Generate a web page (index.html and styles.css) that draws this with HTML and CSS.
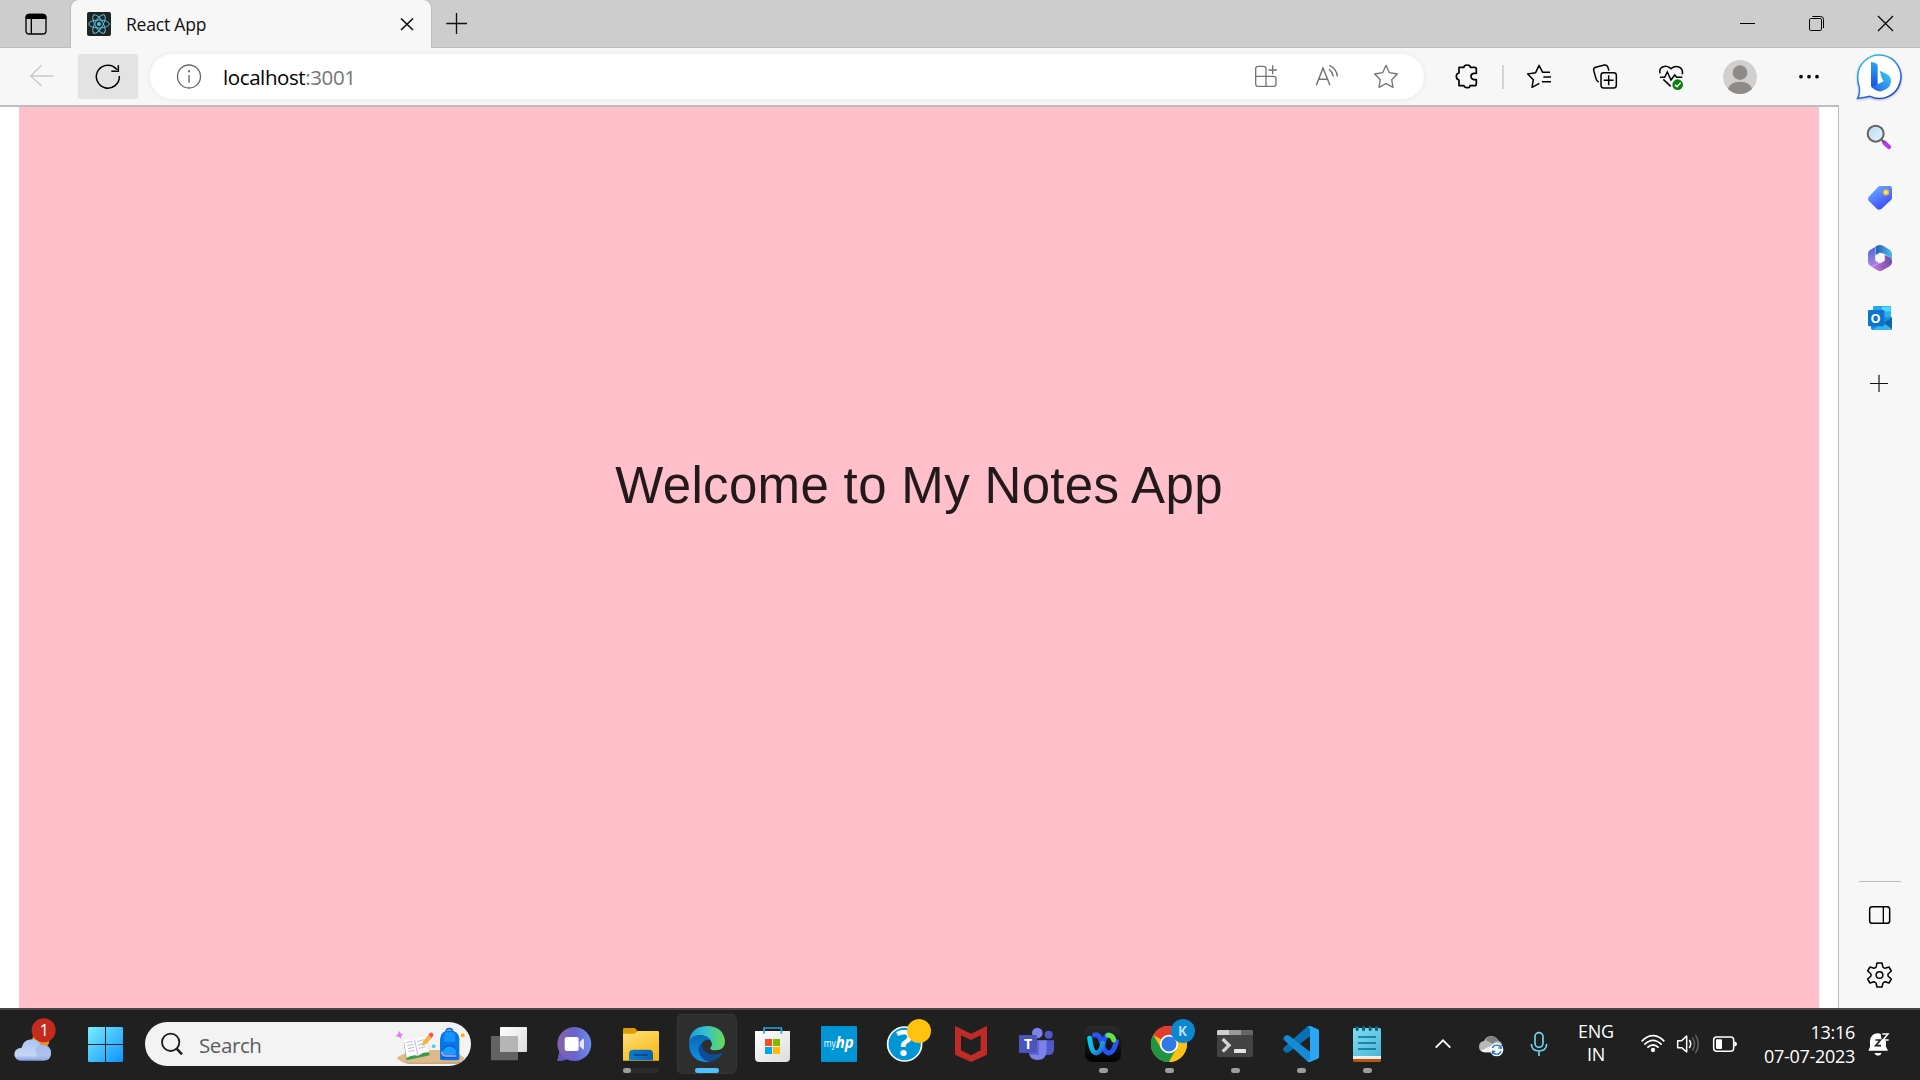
FILE: index.html
```html
<!DOCTYPE html>
<html lang="en">
<head>
<meta charset="utf-8">
<title>React App</title>
<link rel="stylesheet" href="styles.css">
</head>
<body>
<div class="desktop">
  <header class="titlebar">
    <svg width="71" height="48" viewBox="0 0 213 144"><rect x="78" y="43" width="60" height="59" rx="10" fill="none" stroke="#000" stroke-width="4"/><path d="M77 57V52Q77 41 88 41H128Q139 41 139 52V57ZM92 57H96V101H92Z"/></svg>
    <div class="tab">
      <svg class="favicon" width="24" height="24" viewBox="-12 -12 24 24"><rect x="-12" y="-12" width="24" height="24" rx="2" fill="#222"/><circle r="2" fill="#53c1de"/><g fill="none" stroke="#53c1de" stroke-width="1"><ellipse rx="10.4" ry="4"/><ellipse rx="10.4" ry="4" transform="rotate(60)"/><ellipse rx="10.4" ry="4" transform="rotate(120)"/></g></svg>
      <span class="tab-title">React App</span>
      <svg class="tab-close" width="14" height="14" viewBox="0 0 14 14"><path d="M1 1.500L13 13M13 1.500L1 13" fill="none" stroke="#111" stroke-width="1.700"/></svg>
    </div>
    <svg width="52" height="48" viewBox="1293 0 156 144"><path d="M1339 70.500H1401M1369.500 39V102" fill="none" stroke="#111" stroke-width="4"/></svg>
    <div class="window-controls">
      <svg width="69" height="48" viewBox="459 0 207 144"><path d="M540 70.500H585" stroke="#000" stroke-width="3"/></svg>
      <svg width="69" height="48" viewBox="666 0 207 144" fill="none" stroke="#000" stroke-width="3"><rect x="748.500" y="55.500" width="36" height="36" rx="4"/><path d="M757 49.500H782Q790.500 49.500 790.500 58V84"/></svg>
      <svg width="69" height="48" viewBox="873 0 207 144"><path d="M954 48L999 93M999 48L954 93" stroke="#000" stroke-width="3.500"/></svg>
    </div>
  </header>

  <div class="browser">
    <div class="browser-main">
      <nav class="toolbar">
        <svg width="78" height="57" viewBox="0 144 234 171" fill="none" stroke="#c9c9c9" stroke-width="4"><path d="M161 228H92M125 196L92 228L125 258"/></svg>
        <div class="reload"><svg width="60" height="45" viewBox="234 162 180 135" fill="none" stroke="#000" stroke-width="4.500"><path d="M358 228A34.500 34.500 0 1 1 351 209M355 196V214H334"/></svg></div>
        <div class="address">
          <svg width="74" height="45" viewBox="450 162 222 135"><circle cx="567" cy="229.500" r="34.500" fill="none" stroke="#666" stroke-width="4"/><path d="M565 225H569V248H565ZM564 211H570V217H564Z" fill="#666"/></svg>
          <span class="url">localhost<span class="port">:3001</span></span>
          <div class="address-actions">
            <svg width="60" height="45" viewBox="48 42 180 135" fill="none" stroke="#757575" stroke-width="4"><path d="M138 109V86Q138 79 131 79H114Q107 79 107 86V132Q107 139 114 139H161Q168 139 168 132V116Q168 109 161 109H107M138 109V139M145 90H171M158 76V103"/></svg>
            <svg width="60" height="45" viewBox="228 42 180 135" fill="none" stroke="#757575" stroke-width="4.500"><path d="M289 136L309 84L330 136M297 118H322M327 87Q337 95 340 109M328 76Q350 86 352 109"/></svg>
            <svg width="60" height="45" viewBox="408 42 180 135" fill="none" stroke="#757575" stroke-width="4" stroke-linejoin="round"><path d="M498 76L508 98L532 102L515 119L519 142L498 131L477 142L481 119L464 102L488 98Z"/></svg>
          </div>
        </div>
        <svg width="81" height="57" viewBox="612 24 243 171"><path d="M717 82H732Q732 75 741 75Q751 75 751 82H764Q769 82 769 87V100H761Q753 101 753 109Q753 117 761 119H769V131Q769 137 763 137H750Q750 143 741 143Q733 143 732 137H717V120Q709 119 709 109Q709 100 717 99Z" fill="none" stroke="#000" stroke-width="5" stroke-linejoin="round"/><path d="M849 75V147" stroke="#c8c8c8" stroke-width="4.500"/></svg>
        <svg width="68" height="57" viewBox="855 24 204 171" fill="none" stroke="#000" stroke-width="4.500" stroke-linejoin="round"><path d="M990 97H968L957 76L947 98L923 102L940 119L936 142L958 130M970 111H993M966 125H993"/></svg>
        <svg width="66" height="57" viewBox="39 144 198 171" fill="none" stroke="#000" stroke-width="4.500"><rect x="123" y="218" width="46" height="46" rx="8"/><path d="M146 226V256M131 241H161M116 246Q110 243 108 236L101 211Q100 204 107 202L133 195Q140 194 143 200L147 212"/></svg>
        <svg width="66" height="57" viewBox="237 144 198 171"><path d="M300 220C295 198 320 194 333 206C347 194 371 199 367 223M300 232H314L322 216L333 240L344 225L350 232H367M310 238L332 259" fill="none" stroke="#000" stroke-width="4.500"/><circle cx="353" cy="254" r="16" fill="#107c10"/><path d="M345 254L351 260L362 248" fill="none" stroke="#fff" stroke-width="4"/></svg>
        <svg width="70" height="57" viewBox="435 144 210 171"><defs><clipPath id="avatar-clip"><circle cx="540" cy="231" r="51"/></clipPath></defs><circle cx="540" cy="231" r="51" fill="#d2d0ce"/><g fill="#8d8a88" clip-path="url(#avatar-clip)"><circle cx="540" cy="218" r="22"/><path d="M501 282Q503 245 540 245Q577 245 579 282Z"/></g></svg>
        <svg width="62" height="57" viewBox="645 144 186 171"><circle cx="723" cy="230" r="5.500"/><circle cx="747" cy="230" r="5.500"/><circle cx="771" cy="230" r="5.500"/></svg>
      </nav>
      <main class="viewport">
        <section class="welcome"><h1>Welcome to My Notes App</h1></section>
      </main>
    </div>

    <aside class="sidebar">
      <svg class="bing" width="81" height="57" viewBox="837 144 243 171"><defs><linearGradient id="bing-ring" x1="0" y1="0" x2=".6" y2="1"><stop stop-color="#25d0ee"/><stop offset=".5" stop-color="#2a86ee"/><stop offset="1" stop-color="#1848d8"/></linearGradient><linearGradient id="bing-stem" x1="0" y1="0" x2="0" y2="1"><stop stop-color="#2fa5f5"/><stop offset="1" stop-color="#164fe0"/></linearGradient><linearGradient id="bing-leaf" x1="1" y1="0" x2="0" y2="1"><stop stop-color="#39d6e6"/><stop offset="1" stop-color="#1f5cf0"/></linearGradient></defs><path d="M893 295Q900 282 898 262Q893 248 893 231A65 65 0 1 1 930 289Q912 293 893 295Z" fill="#fff" stroke="url(#bing-ring)" stroke-width="4.500"/><path d="M933 185L948 190Q953 192 953 198V254L937 264Q933 261 933 256Z" fill="url(#bing-stem)"/><path d="M959 212L980 222Q993 229 993 242Q993 258 979 267L966 273Q957 276 948 271Q940 268 936 261L971 244L965 233Z" fill="url(#bing-leaf)"/></svg>
      <svg width="81" height="61" viewBox="57 15 243 183"><defs><linearGradient id="lens" x1="0" y1="0" x2="1" y2="1"><stop stop-color="#b8d9f3"/><stop offset="1" stop-color="#e6f6ff"/></linearGradient></defs><path d="M193 128L207 141" stroke="#b936ec" stroke-width="13" stroke-linecap="round"/><path d="M185 120L193 128" stroke="#555" stroke-width="6"/><circle cx="167" cy="101" r="24" fill="url(#lens)" stroke="#636363" stroke-width="6"/></svg>
      <svg width="81" height="60" viewBox="57 198 243 180"><defs><linearGradient id="tag" x1="0" y1="0" x2=".6" y2="1"><stop stop-color="#6cbcff"/><stop offset="1" stop-color="#3c48fb"/></linearGradient></defs><path d="M180 258H209Q216 258 216 265V294Q216 297 213 300L184 327Q177 332 171 327L146 302Q142 297 146 291L174 261Q177 258 180 258Z" fill="url(#tag)"/><circle cx="198" cy="277" r="7" fill="#fff3ad" stroke="#f5bc13" stroke-width="5"/></svg>
      <svg width="81" height="60" viewBox="57 378 243 180"><defs><linearGradient id="office-a" x1="0" y1="0" x2="0" y2="1"><stop stop-color="#3f67d7"/><stop offset="1" stop-color="#b180e4"/></linearGradient><linearGradient id="office-b"><stop stop-color="#235fb4"/><stop offset="1" stop-color="#4bc1ed"/></linearGradient><linearGradient id="office-c"><stop stop-color="#d17ee7"/><stop offset="1" stop-color="#704ba2"/></linearGradient></defs><path d="M180 434L172 437L150 450Q144 454 144 461V487Q144 494 151 497Q160 500 168 494L180 487L166 478V443Z" fill="url(#office-a)"/><path d="M170 438Q180 432 189 437L210 450Q216 454 216 462V483Q215 475 207 470L189 460H180L167 468V445Q167 440 170 438Z" fill="url(#office-b)"/><path d="M216 462V486Q216 493 210 498L188 511Q180 515 172 511L151 498Q160 501 168 495L193 481V464L208 471Q216 475 216 483Z" fill="url(#office-c)"/><path d="M180 459L193 466V482L180 489L167 482V466Z" fill="#f7f7f7" stroke="#f7f7f7" stroke-width="2" stroke-linejoin="round"/></svg>
      <svg width="81" height="60" viewBox="57 558 243 180"><rect x="159" y="618" width="54" height="40" rx="3" fill="#28a8ea"/><path d="M186 620H212V650H186Z" fill="#50d9ff"/><path d="M186 634H212V652H186Z" fill="#2caeed"/><path d="M153 652H216V686Q216 690 212 690H158Q153 690 153 685Z" fill="#1490df"/><path d="M190 670L216 652V686Z" fill="#1266a8"/><path d="M157 689L190 668L216 688Q215 690 212 690Z" fill="#35b5f1"/><rect x="144" y="630" width="49" height="49" rx="4" fill="#0f72cd"/><text class="glyph" x="166.500" y="668" font-size="38">O</text></svg>
      <svg width="81" height="73" viewBox="57 738 243 219"><path d="M150 850.500H204M177 824V876" stroke="#111" stroke-width="3.500"/></svg>
      <div class="sidebar-tools">
        <div class="sidebar-rule"></div>
        <svg width="81" height="60" viewBox="57 75 243 180"><rect x="149" y="140" width="60" height="50" rx="8" fill="none" stroke="#000" stroke-width="4.500"/><path d="M190 140V190" stroke="#000" stroke-width="4"/></svg>
        <svg width="81" height="63" viewBox="57 255 243 189" fill="none" stroke="#000" stroke-width="4.500" stroke-linejoin="round"><circle cx="178.500" cy="345" r="10"/><path d="M171 309H186L189 322L195 325L207 321L214 333L204 342V348L214 357L207 369L195 365L189 369L186 381H171L168 369L162 365L150 369L143 357L153 348V342L143 333L150 321L162 325L168 322Z"/></svg>
      </div>
    </aside>
  </div>

  <footer class="taskbar">
    <svg width="74" height="70" viewBox="0 30 222 210"><defs><linearGradient id="cloud" x1="0" y1="0" x2="0" y2="1"><stop stop-color="#a9c6f5"/><stop offset=".75" stop-color="#c6d5f3"/><stop offset="1" stop-color="#7f9be0"/></linearGradient></defs><circle cx="122" cy="122" r="26" fill="#f38b16"/><path d="M64 182A19 19 0 0 1 60 144Q63 143 65 143A30 30 0 0 1 122 136Q153 133 153 160Q153 181 132 182Z" fill="url(#cloud)"/><path d="M106 151Q108 133 127 132Q153 135 153 160Q150 180 132 180Q108 176 106 151Z" fill="#9bb4e8" opacity=".6"/><circle cx="131" cy="91" r="36" fill="#c42b1c"/><text class="badge-text" x="133" y="108" font-size="50">1</text></svg>
    <svg width="65" height="70" viewBox="222 30 195 210"><defs><linearGradient id="start" gradientUnits="userSpaceOnUse" x1="264" y1="80" x2="369" y2="186"><stop stop-color="#7aeefe"/><stop offset="1" stop-color="#0c93fb"/></linearGradient></defs><path d="M268 81H315V132H264V85Q264 81 268 81ZM318 81H365Q369 81 369 85V132H318ZM264 135H315V186H268Q264 186 264 182ZM318 135H369V182Q369 186 365 186H318Z" fill="url(#start)"/></svg>
    <div class="search">
      <svg width="54" height="44" viewBox="435 66 162 132" fill="none" stroke="#1d1d1d"><circle cx="512" cy="127" r="26" stroke-width="5.500"/><path d="M530 146L546 163" stroke-width="7.500"/></svg>
      <span class="search-label">Search</span>
      <svg class="search-art" width="81" height="44" viewBox="1170 66 243 132"><path d="M1190 175Q1210 152 1300 150H1360L1394 174Q1386 191 1360 191H1235Q1208 191 1190 175Z" fill="#deb98c"/><path d="M1205 186Q1250 191 1386 185L1375 191H1225Z" fill="#c89d6c"/><path d="M1211 126L1220 181L1289 166L1282 124Z" fill="#3c9b45"/><path d="M1211 122Q1230 113 1244 121Q1262 107 1280 113L1288 157Q1270 155 1254 167Q1235 163 1220 174Z" fill="#fbfaff"/><path d="M1244 121L1254 167M1219 128L1238 124M1222 137L1240 133M1224 146L1242 142M1226 155L1244 151M1251 125L1272 119M1254 135L1272 130M1256 145L1278 140" stroke="#b8afc9" stroke-width="2.500"/><path d="M1265 138L1270 123L1285 105L1295 114L1279 132Z" fill="#f9b33b"/><path d="M1285 105L1290 98Q1300 96 1300 107L1295 114Z" fill="#ee5952"/><path d="M1197 92L1201 100L1209 103L1203 108L1204 117L1196 110L1187 108L1194 102Z" fill="#dc7af5"/><circle cx="1301" cy="139" r="6" fill="#5bcde8"/><circle cx="1388" cy="106" r="6" fill="#ffb20f"/><path d="M1339 97Q1337 86 1348 86Q1359 86 1358 97" fill="none" stroke="#1b62bd" stroke-width="5"/><path d="M1320 178V118Q1321 92 1349 91Q1377 93 1378 118V178Q1377 181 1370 181H1328Q1321 181 1320 178Z" fill="#0876e8"/><path d="M1334 100Q1348 92 1364 100L1366 125H1332Z" fill="#1594fb"/><path d="M1327 155Q1330 134 1350 134Q1370 136 1372 157L1370 174H1327Z" fill="#0860cf"/><path d="M1330 150Q1348 127 1368 150L1370 162Q1348 171 1327 161Z" fill="#1b9cff"/><path d="M1325 155Q1326 166 1335 168H1369" fill="none" stroke="#c4a6fa" stroke-width="4"/></svg>
    </div>
    <svg width="66" height="70" viewBox="18 30 198 210"><defs><linearGradient id="pane" x1="0" y1="0" x2="1" y2="1"><stop stop-color="#fff"/><stop offset="1" stop-color="#dcdcdc"/></linearGradient></defs><rect x="90" y="81" width="81" height="75" rx="3" fill="url(#pane)"/><rect x="63" y="108" width="81" height="73" rx="3" fill="#707070" opacity=".85"/><path d="M90 108H144V156H90Z" fill="#b5b5b5"/></svg>
    <svg width="66" height="70" viewBox="216 30 198 210"><defs><linearGradient id="chat"><stop stop-color="#8763a9"/><stop offset=".5" stop-color="#6a61cf"/><stop offset="1" stop-color="#6d91ed"/></linearGradient></defs><path d="M262 183L268 156A51 51 0 1 1 291 178Q278 184 262 183Z" fill="url(#chat)"/><path d="M268 156A51 51 0 0 0 354 160Q340 184 312 183Q298 182 291 178Q278 184 262 183Z" fill="#5355c7" opacity=".65"/><rect x="284" y="111" width="42" height="42" rx="6" fill="#fff"/><path d="M329 126L338 117Q342 115 342 120V146Q342 150 338 147L329 139Z" fill="#e6e6ff"/></svg>
    <svg width="66" height="70" viewBox="414 30 198 210"><defs><linearGradient id="folder" x1="0" y1="0" x2=".6" y2="1"><stop stop-color="#ffe17a"/><stop offset="1" stop-color="#f9ba19"/></linearGradient><linearGradient id="folder-tray"><stop stop-color="#127ccf"/><stop offset="1" stop-color="#0662b1"/></linearGradient></defs><path d="M459 110V88Q459 84 463 84H491Q495 84 498 88L503 95V110Z" fill="#df9d05"/><path d="M459 101H491Q496 101 503 93H563Q567 93 567 97V182H459Z" fill="url(#folder)"/><path d="M477 181V162Q477 149 490 149H537Q549 149 549 162V181Z" fill="url(#folder-tray)"/><path d="M491 165H534" stroke="#063f7a" stroke-width="4"/><rect x="459" y="204" width="108" height="15" rx="7" fill="#2b2b2b"/><rect x="459" y="204" width="24" height="15" rx="7" fill="#9d9d9d"/></svg>
    <svg width="66" height="70" viewBox="612 30 198 210"><defs><linearGradient id="edge-top"><stop stop-color="#199cda"/><stop offset=".45" stop-color="#35bfd0"/><stop offset="1" stop-color="#68dc50"/></linearGradient><linearGradient id="edge-left" x1="0" y1="0" x2="0" y2="1"><stop stop-color="#086ab5"/><stop offset="1" stop-color="#1290e7"/></linearGradient></defs><rect x="622" y="43" width="177" height="177" rx="15" fill="#2e2e2e" stroke="#393939" stroke-width="3"/><path d="M657 130Q659 80 711 78Q759 79 765 122Q766 150 736 151Q718 150 721 143Q731 132 720 119Q704 100 675 108Q660 116 657 130Z" fill="url(#edge-top)"/><path d="M657 131Q659 108 684 106Q711 105 723 121Q704 115 695 130Q683 161 720 185Q714 187 700 185Q658 177 657 131Z" fill="url(#edge-left)"/><path d="M695 128Q680 142 689 162Q698 183 717 185Q744 181 757 162Q757 158 753 159Q722 171 704 153Q694 142 695 128Z" fill="#0d4d96"/><rect x="675" y="204" width="72" height="15" rx="7" fill="#4cc2ff"/></svg>
    <svg width="66" height="70" viewBox="810 30 198 210"><path d="M855 93H960V173Q960 186 947 186H868Q855 186 855 173Z" fill="url(#pane)"/><path d="M882 101V84H934V101" fill="none" stroke="#25a8e0" stroke-width="5"/><path d="M885 117H906V138H885Z" fill="#f25022"/><path d="M909 117H930V138H909Z" fill="#7fba00"/><path d="M885 141H906V162H885Z" fill="#00a4ef"/><path d="M909 141H930V162H909Z" fill="#ffb900"/></svg>
    <svg width="66" height="70" viewBox="1008 30 198 210"><rect x="1053" y="78" width="108" height="108" rx="3" fill="#0096d6"/><text class="myhp" x="1061" y="142" font-size="32" textLength="36" lengthAdjust="spacingAndGlyphs">my</text><text class="myhp-bold" x="1097" y="145" font-size="49" textLength="54" lengthAdjust="spacingAndGlyphs">hp</text></svg>
    <svg width="66" height="70" viewBox="1206 30 198 210"><circle cx="1304" cy="132" r="51" fill="#0096d6" stroke="#fff" stroke-width="5"/><text class="glyph" x="1304" y="169" font-size="108">?</text><circle cx="1347" cy="93" r="36" fill="#ffc20e"/></svg>
    <svg width="66" height="70" viewBox="-6 30 198 210"><path fill-rule="evenodd" d="M45 78L93 101L141 78V164L93 186L45 164ZM63 106V151L93 166L122 151V106L93 120Z" fill="#c02b2a"/></svg>
    <svg width="66" height="70" viewBox="192 30 198 210"><circle cx="326" cy="104" r="12" fill="#5059c9"/><path d="M310 121H342V150Q341 165 325 165H310Z" fill="#5059c9"/><circle cx="292" cy="99" r="16" fill="#7b83eb"/><path d="M266 121H320V152Q318 180 293 180Q268 180 266 155Z" fill="#7b83eb"/><path d="M266 121H297V165H268Z" fill="#474cb0" opacity=".5"/><rect x="237" y="105" width="54" height="54" rx="4" fill="#4b53bc"/><text class="glyph" x="264" y="146" font-size="42">T</text></svg>
    <svg width="66" height="70" viewBox="390 30 198 210"><defs><linearGradient id="webex-box" x1="0" y1="0" x2="0" y2="1"><stop stop-color="#2b2b2b"/><stop offset="1" stop-color="#020202"/></linearGradient><linearGradient id="webex-l" x1="0" y1="0" x2="1" y2="1"><stop stop-color="#06c8f4"/><stop offset=".6" stop-color="#19a8d8"/><stop offset="1" stop-color="#1c55ed"/></linearGradient></defs><rect x="435" y="78" width="108" height="108" rx="22" fill="url(#webex-box)"/><g fill="none" stroke-width="15" stroke-linecap="round"><path d="M489 130Q496 103 507 105" stroke="#1c55ed"/><path d="M464 105Q479 101 486 130Q494 159 507 159Q521 158 529 125" stroke="#2954f4"/><path d="M449 115Q454 159 469 159Q483 158 489 130" stroke="url(#webex-l)"/><path d="M504 106Q518 105 521 120" stroke="#62df49"/></g><rect x="477" y="204" width="27" height="15" rx="7" fill="#9d9d9d"/></svg>
    <svg width="66" height="70" viewBox="588 30 198 210"><circle cx="687" cy="132" r="54" fill="#fbc116"/><path d="M687 132L640 105A54 54 0 0 1 734 105Z" fill="#e33b2e"/><path d="M640 105L664 146L687 159L687 186A54 54 0 0 1 640 105Z" fill="#229342"/><path d="M664 145L687 132L710 145L687 186A54 54 0 0 1 660 179Z" fill="#229342"/><path d="M710 145L687 186A54 54 0 0 0 739 118H687Z" fill="#fbc116"/><circle cx="687" cy="132" r="25" fill="#2f79ea" stroke="#fff" stroke-width="5"/><circle cx="729" cy="93" r="36" fill="#0b86cf"/><text class="badge-k" x="727" y="107" font-size="40">K</text><rect x="675" y="204" width="27" height="15" rx="7" fill="#9d9d9d"/></svg>
    <svg width="66" height="70" viewBox="786 30 198 210"><rect x="831" y="90" width="108" height="81" rx="4" fill="#434343"/><path d="M834 90H867V105H831V93Z" fill="#cfcfcf"/><path d="M867 90H903V105H867Z" fill="#999"/><path d="M903 90H936L939 93V105H903Z" fill="#666"/><path d="M848 117L867 136L848 155" fill="none" stroke="#d2d2d2" stroke-width="10"/><rect x="882" y="147" width="36" height="12" rx="2" fill="#e5e5e5"/><rect x="873" y="204" width="27" height="15" rx="7" fill="#9d9d9d"/></svg>
    <svg width="66" height="70" viewBox="984 30 198 210"><path d="M1110 78V109L1047 156Q1040 161 1034 155L1030 151Q1028 146 1032 142L1101 80Z" fill="#0870b4"/><path d="M1032 120Q1028 115 1032 111L1038 106Q1043 103 1048 107L1110 155V186L1102 184Z" fill="#168bd5"/><path d="M1102 81Q1106 77 1111 78L1134 88Q1137 90 1137 94V170Q1137 174 1133 176L1110 186Q1105 187 1101 183Q1110 183 1110 174V88Q1109 82 1102 81Z" fill="#29a7f4"/><rect x="1071" y="204" width="27" height="15" rx="7" fill="#9d9d9d"/></svg>
    <svg width="66" height="70" viewBox="1182 30 198 210"><defs><linearGradient id="notes" x1="0" y1="0" x2="1" y2="1"><stop stop-color="#83def4"/><stop offset="1" stop-color="#49b5d5"/></linearGradient></defs><path d="M1239 174H1323V182Q1323 186 1319 186H1243Q1239 186 1239 182Z" fill="#b9560e"/><path d="M1239 164H1323V177H1239Z" fill="#eee"/><path d="M1243 84H1319Q1323 84 1323 88V168H1239V88Q1239 84 1243 84Z" fill="url(#notes)"/><path d="M1254 111H1308M1254 129H1308M1254 147H1308" stroke="#056d90" stroke-width="5"/><g fill="#0a6481"><rect x="1247" y="78" width="9" height="15" rx="4"/><rect x="1266" y="78" width="9" height="15" rx="4"/><rect x="1286" y="78" width="9" height="15" rx="4"/><rect x="1305" y="78" width="9" height="15" rx="4"/></g><rect x="1269" y="204" width="27" height="15" rx="7" fill="#9d9d9d"/></svg>

    <svg width="66" height="70" viewBox="-30 30 198 210"><path d="M77 143L99 121L121 143" fill="none" stroke="#fff" stroke-width="5.500"/></svg>
    <svg width="48" height="70" viewBox="168 30 144 210"><path d="M222 157Q207 155 207 139Q209 124 222 123Q227 109 243 108Q260 109 266 123Q277 126 277 140V157Z" fill="#b9b9b9"/><path d="M226 119Q236 107 248 109Q261 111 266 123Q255 122 249 132Z" fill="#818181"/><path d="M212 152L250 134L253 157H222Z" fill="#f3f3f3"/><circle cx="260" cy="149" r="20" fill="#fff"/><circle cx="260" cy="149" r="13.500" fill="none" stroke="#1475cd" stroke-width="4" stroke-dasharray="34 8.400" stroke-dashoffset="-4"/><path d="M273 135V144H264M247 163V154H256" fill="none" stroke="#1475cd" stroke-width="3.500"/></svg>
    <svg width="48" height="70" viewBox="312 30 144 210" fill="none" stroke="#72d3ec" stroke-width="5"><rect x="375" y="98" width="24" height="44" rx="12"/><path d="M364 132Q365 153 387 153Q409 153 410 132M387 153V168"/></svg>
    <div class="language"><span>ENG</span><span>IN</span></div>
    <svg width="41" height="70" viewBox="660 30 123 210" fill="none" stroke="#fff" stroke-width="5"><path d="M695 124Q729 90 763 124M703 134Q729 108 755 134M712 143Q729 127 746 143"/><circle cx="729" cy="150" r="6.500" fill="#fff" stroke="none"/></svg>
    <svg width="36" height="70" viewBox="783 30 108 210" fill="none" stroke="#fff" stroke-width="4.500" stroke-linejoin="round"><path d="M803 122H815L830 108V156L815 143H803ZM838 120Q846 131 838 144"/><path d="M847 112Q860 132 847 152M856 104Q874 132 856 160" stroke="#606060"/></svg>
    <svg width="37" height="70" viewBox="891 30 111 210"><rect x="911" y="111" width="60" height="43" rx="9" fill="none" stroke="#fff" stroke-width="4.500"/><rect x="918" y="118" width="18" height="29" rx="3" fill="#fff"/><path d="M973 124Q981 126 981 132Q981 138 973 140Z" fill="#fff"/></svg>
    <div class="clock"><span>13:16</span><span>07-07-2023</span></div>
    <svg width="65" height="70" viewBox="1335 30 195 210"><path d="M1375 152L1380 140V123Q1382 101 1404 100Q1428 103 1428 123V140L1434 152ZM1393 159H1415Q1412 167 1404 167Q1396 167 1393 159Z" fill="#fff"/><path d="M1411 94H1439V124H1428L1414 116Z" fill="#202020"/><path d="M1396 120H1411L1397 137H1413" fill="none" stroke="#202020" stroke-width="5"/><path d="M1417 102H1434L1419 120H1436" fill="none" stroke="#fff" stroke-width="4.500"/></svg>
  </footer>
</div>
</body>
</html>
```
FILE: styles.css
```css
* { box-sizing: border-box; }
body { margin: 0; overflow: hidden; font-family: "Open Sans", "Noto Sans", sans-serif; }
svg { display: block; flex: none; }

.desktop { width: 1920px; height: 1080px; display: flex; flex-direction: column; background: #f7f7f7; }

.titlebar { height: 48px; flex: none; display: flex; background: #cdcdcd; box-shadow: inset 0 -1px #bdbdbd; }
.tab { width: 360px; display: flex; align-items: center; padding: 0 17px 0 16px; background: #f7f7f7; border-radius: 8px 8px 0 0; box-shadow: 0 0 2px #999; clip-path: inset(0 -3px 0 -3px); }
.tab-title { margin-left: 15px; padding-bottom: 1px; font-size: 17.5px; line-height: 24px; letter-spacing: -0.2px; color: #111; }
.tab-close { margin-left: auto; }
.window-controls { display: flex; margin-left: auto; }

.browser { height: 960px; flex: none; display: flex; }
.browser-main { width: 1839px; display: flex; flex-direction: column; }
.toolbar { height: 57px; flex: none; display: flex; align-items: center; background: #f7f7f7; }
.reload { width: 60px; height: 45px; border-radius: 3px; background: #e3e3e3; }
.address { width: 1274px; height: 45px; margin-left: 12px; padding-right: 8px; display: flex; align-items: center; border-radius: 23px; background: #fff; box-shadow: 0 0 6px rgba(0, 0, 0, .07); }
.url { margin-left: -1px; font-size: 20.5px; line-height: 28px; letter-spacing: -0.4px; color: #000; }
.port { color: #757575; }
.address-actions { display: flex; margin-left: auto; }

.viewport { flex: 1; padding: 0 19px; background: #fff; border-top: 2px solid #bdbdbd; border-right: 1px solid #bdbdbd; }
.welcome { height: 100%; padding-top: 347px; background: #ffc0cb; text-align: center; }
.welcome h1 { margin: 0; font: 400 51px/63px "Liberation Sans", Arial, sans-serif; letter-spacing: .0066em; color: rgba(0, 0, 0, .87); }

.sidebar { width: 81px; display: flex; flex-direction: column; background: #f7f7f7; }
.bing { filter: drop-shadow(0 1px 1px rgba(0, 0, 0, .25)); }
.sidebar-tools { margin-top: auto; display: flex; flex-direction: column; align-items: center; }
.sidebar-rule { width: 42px; height: 1px; margin-bottom: 3px; background: #bbb; }

.taskbar { height: 72px; flex: none; display: flex; border-top: 2px solid #474547; background: #202020; color: #fff; }
.search { width: 326px; height: 44px; margin: 12px 5px 0 6px; display: flex; align-items: center; border-radius: 22px; background: #f3f3f3; color: #5c5c5c; }
.search-label { padding-top: 2px; font-size: 20.5px; line-height: 28px; letter-spacing: -0.4px; }
.search-art { margin-left: auto; }
.language, .clock { display: flex; flex-direction: column; padding-top: 10px; font-size: 18px; line-height: 24px; }
.language { width: 68px; align-items: center; line-height: 23px; letter-spacing: -0.2px; }
.clock { width: 111px; align-items: flex-end; letter-spacing: -0.3px; }

.glyph { font-family: "Open Sans", sans-serif; font-weight: 700; fill: #fff; text-anchor: middle; }
.badge-text { font-family: "Open Sans", sans-serif; fill: #fff; text-anchor: middle; }
.badge-k { font-family: "Open Sans", sans-serif; font-weight: 700; fill: #b9def4; text-anchor: middle; }
.myhp { font-family: "Open Sans", sans-serif; fill: #fff; }
.myhp-bold { font-family: "Open Sans", sans-serif; font-style: italic; font-weight: 700; fill: #fff; }
```
